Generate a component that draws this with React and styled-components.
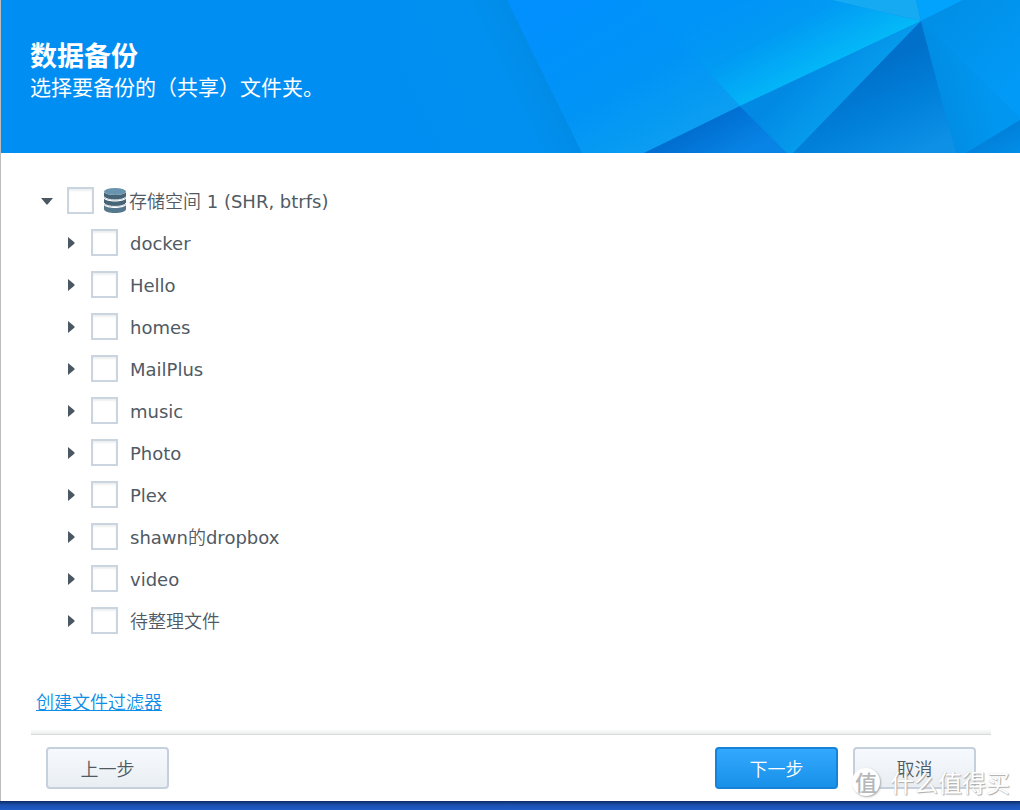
import React, { useState } from 'react'
import styled, { createGlobalStyle } from 'styled-components'

const folders = ['docker', 'Hello', 'homes', 'MailPlus', 'music', 'Photo', 'Plex', 'shawn的dropbox', 'video', '待整理文件']

function HeaderArt() {
    return (
        <Art viewBox="0 0 620 153" aria-hidden="true">
            <defs>
                <linearGradient id="base" gradientUnits="userSpaceOnUse" x1="0" y1="120" x2="156" y2="44">
                    <stop offset="0" stopColor="#018ef2" />
                    <stop offset="0.65" stopColor="#0190ef" />
                    <stop offset="1" stopColor="#0188e2" />
                </linearGradient>
                <linearGradient id="left" gradientUnits="userSpaceOnUse" x1="180" y1="0" x2="270" y2="153">
                    <stop offset="0" stopColor="#0190fd" />
                    <stop offset="0.55" stopColor="#0194f6" />
                    <stop offset="1" stopColor="#0c9ff0" />
                </linearGradient>
                <linearGradient id="cyan" gradientUnits="userSpaceOnUse" x1="360" y1="-10" x2="408" y2="80">
                    <stop offset="0" stopColor="#0194f8" />
                    <stop offset="0.45" stopColor="#019af3" />
                    <stop offset="1" stopColor="#04b9f8" />
                </linearGradient>
                <linearGradient id="lower" gradientUnits="userSpaceOnUse" x1="300" y1="118" x2="325" y2="163">
                    <stop offset="0" stopColor="#006bce" />
                    <stop offset="1" stopColor="#0784e6" />
                </linearGradient>
                <linearGradient id="sliver" gradientUnits="userSpaceOnUse" x1="390" y1="85" x2="425" y2="120">
                    <stop offset="0" stopColor="#0189e4" />
                    <stop offset="1" stopColor="#069bec" />
                </linearGradient>
                <linearGradient id="deep" gradientUnits="userSpaceOnUse" x1="450" y1="75" x2="490" y2="165">
                    <stop offset="0" stopColor="#0070ca" />
                    <stop offset="0.5" stopColor="#0180da" />
                    <stop offset="1" stopColor="#0e90e6" />
                </linearGradient>
                <linearGradient id="right" gradientUnits="userSpaceOnUse" x1="530" y1="100" x2="590" y2="86">
                    <stop offset="0" stopColor="#018be2" />
                    <stop offset="1" stopColor="#0197f0" />
                </linearGradient>
                <linearGradient id="far" gradientUnits="userSpaceOnUse" x1="550" y1="0" x2="620" y2="80">
                    <stop offset="0" stopColor="#018fe7" />
                    <stop offset="1" stopColor="#019af6" />
                </linearGradient>
                <linearGradient id="corner" gradientUnits="userSpaceOnUse" x1="585" y1="138" x2="600" y2="165">
                    <stop offset="0" stopColor="#0180d8" />
                    <stop offset="1" stopColor="#018ee9" />
                </linearGradient>
            </defs>
            <path d="M0 0H107L182 153H0Z" fill="url(#base)" />
            <path d="M107 0H240L340 106L244 153H182Z" fill="url(#left)" />
            <path d="M240 0H432L521 21L340 106Z" fill="url(#cyan)" />
            <path d="M432 0H516L521 21Z" fill="#16aaf2" />
            <path d="M516 0H563L521 21Z" fill="#01a3fc" />
            <path d="M340 106L387 153H244Z" fill="url(#lower)" />
            <path d="M521 21L340 106L387 153H393Z" fill="url(#sliver)" />
            <path d="M521 21L393 153H556Z" fill="url(#deep)" />
            <path d="M521 21L620 118V120L566 153H556Z" fill="url(#right)" />
            <path d="M563 0H620V118L521 21Z" fill="url(#far)" />
            <path d="M620 120V153H566Z" fill="url(#corner)" />
        </Art>
    )
}

function VolumeIcon() {
    return (
        <Volume viewBox="0 0 22 25" aria-hidden="true">
            <path d="M0 17v4c0 5.300 22 5.300 22 0v-4c-2 4-20 4-22 0Z" fill="#56788d" />
            <path d="M0 10.500v4.500c0 5 22 5 22 0v-4.500c-2 4-20 4-22 0Z" fill="#476476" />
            <path d="M0 4v4.500c0 5 22 5 22 0V4c-2 4-20 4-22 0Z" fill="#476476" />
            <path d="M0 15c2 4.600 20 4.600 22 0M0 8.500c2 4.600 20 4.600 22 0" fill="none" stroke="#e8eef2" strokeWidth="1" />
            <ellipse cx="11" cy="3.500" rx="11" ry="3.500" fill="#6a94ad" />
        </Volume>
    )
}

function App() {
    const [open, setOpen] = useState(true)

    return (
        <Desktop>
            <GlobalStyle />
            <Wizard>
                <Header>
                    <HeaderArt />
                    <Title>数据备份</Title>
                    <Subtitle>选择要备份的（共享）文件夹。</Subtitle>
                </Header>

                <Content>
                    <Row>
                        <Toggle aria-label="存储空间 1" aria-expanded={open} onClick={() => setOpen(!open)}>
                            <svg width="12" height="7" viewBox="0 0 12 7"><path d="M0 0H12L6.7 6.3Q6 7 5.3 6.3Z" fill="#4b5763" /></svg>
                        </Toggle>
                        <Check id="volume" />
                        <VolumeIcon />
                        <Name htmlFor="volume">存储空间 1 (SHR, btrfs)</Name>
                    </Row>
                    {open && folders.map((name) => (
                        <Row key={name} $child>
                            <Toggle aria-label={name} aria-expanded={false}>
                                <svg width="7" height="12" viewBox="0 0 7 12"><path d="M0 0L6.3 5.3Q7 6 6.3 6.7L0 12Z" fill="#4b5763" /></svg>
                            </Toggle>
                            <Check id={name} />
                            <Name htmlFor={name} $child>{name}</Name>
                        </Row>
                    ))}
                </Content>

                <Filter><a href="#filter">创建文件过滤器</a></Filter>

                <Footer>
                    <Button>上一步</Button>
                    <Spacer />
                    <Button $primary>下一步</Button>
                    <Button>取消</Button>
                </Footer>
            </Wizard>

            <Watermark>
                <Seal>值</Seal>
                <span>什么值得买</span>
            </Watermark>
        </Desktop>
    )
}

export default App

const GlobalStyle = createGlobalStyle`
  * { box-sizing: border-box; }

  body {
    margin: 0;
    background: #1d54b5;
    color: #505a64;
    font-family: "DejaVu Sans", "Noto Sans CJK SC DemiLight", "Noto Sans CJK SC", sans-serif;
    font-size: 18px;
  }

  button, input { font: inherit; }
`

const Desktop = styled.div`
  position: relative;
  display: flex;
  flex-direction: column;
  min-height: 100vh;
  padding-bottom: 9px;
  background: linear-gradient(to top, #1f5cc4 0, #1b50b0 5px, #0e2c63 9px);
`

const Wizard = styled.main`
  display: flex;
  flex: 1;
  flex-direction: column;
  border-left: 1px solid #bcbcbc;
  background: #fff;
`

const Header = styled.header`
  position: relative;
  height: 153px;
  padding: 37px 29px;
  overflow: hidden;
  background: #018ef2;
  color: #fff;
  font-family: "Noto Sans CJK SC", sans-serif;
`

const Art = styled.svg`
  position: absolute;
  top: 0;
  right: 0;
  width: 620px;
  height: 153px;
`

const Title = styled.h1`
  position: relative;
  margin: 0;
  font-size: 27px;
  font-weight: 700;
  line-height: 36px;
`

const Subtitle = styled.p`
  position: relative;
  margin: 0;
  font-size: 21px;
  font-weight: 400;
  line-height: 26px;
`

const Content = styled.section`
  flex: 1;
  padding: 26px 30px 0 34px;
`

const Row = styled.div`
  display: flex;
  align-items: center;
  height: 42px;
  padding-left: ${props => props.$child ? '24px' : '0'};
`

const Toggle = styled.button`
  display: flex;
  align-items: center;
  justify-content: center;
  width: 24px;
  height: 24px;
  margin-right: 8px;
  padding: 2px 0 0;
  border: 0;
  background: none;
  cursor: pointer;
`

const Check = styled.input.attrs({ type: 'checkbox' })`
  appearance: none;
  width: 27px;
  height: 27px;
  margin: 0;
  border: 2px solid #cbd5df;
  background: #fff;
  box-shadow: inset 0 2px 2px #eeeff1;

  &:checked {
    background: #2c9ff5;
  }
`

const Volume = styled.svg`
  width: 22px;
  height: 25px;
  margin: 0 3px 0 10px;
`

const Name = styled.label`
  margin-left: ${props => props.$child ? '12px' : '0'};
  padding-top: 4px;
  line-height: 24px;
`

const Filter = styled.div`
  padding: 0 35px 14px;
  line-height: 24px;

  a {
    color: #0e8ee6;
    text-underline-offset: 1px;
    text-decoration-thickness: 1px;
  }
`

const Footer = styled.footer`
  display: flex;
  gap: 15px;
  margin: 0 29px 0 30px;
  padding: 18px 15px 12px;
  background: linear-gradient(#fff, #ebecec 5px, #d9dbdb 5px, #d9dbdb 6px, #fff 6px);
`

const Spacer = styled.div`
  flex: 1;
`

const Button = styled.button`
  width: 123px;
  height: 42px;
  padding: 0;
  border: 2px solid ${props => props.$primary ? '#1683d9' : '#c6d0dd'};
  border-radius: 4px;
  background: ${props => props.$primary ? 'linear-gradient(#33a8ff, #1991e8)' : 'linear-gradient(#f6faff, #e9eef2)'};
  color: ${props => props.$primary ? '#fff' : '#505a64'};
  cursor: pointer;
`

const Watermark = styled.div`
  position: absolute;
  right: 10px;
  bottom: 13px;
  display: flex;
  align-items: center;
  gap: 10px;
  color: #fff;
  font-family: "Noto Sans CJK SC", sans-serif;
  font-size: 24px;
  font-weight: 400;
  line-height: 30px;
  text-shadow: 1px 1px 1px #aaa, 0 0 1px #ccc;
  pointer-events: none;
`

const Seal = styled.span`
  width: 28px;
  height: 28px;
  border-radius: 50%;
  background: #fff;
  box-shadow: 1px 1px 2px #aaa;
  color: #b5b7ba;
  font-size: 22px;
  font-weight: 500;
  line-height: 26px;
  text-align: center;
  text-shadow: none;
`
